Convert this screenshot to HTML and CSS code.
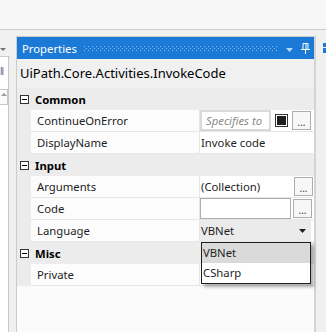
FILE: index.html
```html
<!DOCTYPE html>
<html lang="en">
<head>
    <meta charset="UTF-8">
    <meta name="viewport" content="width=device-width, initial-scale=1.0">
    <title>Properties</title>
    <link rel="stylesheet" href="styles.css">
</head>
<body>
    <div class="topbar"></div>
    <div class="workspace">
        <div class="left-pane">
            <div class="left-head"><span class="left-arrow"></span></div>
            <div class="left-body">
                <span class="left-text">ll</span>
                <div class="left-box"><span class="up-arrow"></span></div>
            </div>
        </div>

        <div class="props">
            <div class="props-head">
                <span class="props-title">Properties</span>
                <svg class="grip" width="194" height="6">
                    <defs>
                        <pattern id="dots" width="4" height="4" patternUnits="userSpaceOnUse">
                            <rect x="0" y="0" width="1" height="1" fill="#8dbdee"/>
                            <rect x="2" y="2" width="1" height="1" fill="#8dbdee"/>
                        </pattern>
                    </defs>
                    <rect width="194" height="6" fill="url(#dots)"/>
                </svg>
                <svg class="head-arrow" width="7" height="4"><path d="M0 0h7l-3.5 4z" fill="#b9d5f3"/></svg>
                <svg class="pin" width="9" height="11">
                    <path d="M2 0.5h5v6h-5z" fill="none" stroke="#fff"/>
                    <path d="M0 6.5h9" stroke="#fff"/>
                    <path d="M4.5 7v4" stroke="#fff"/>
                    <path d="M5 1v5" stroke="#fff"/>
                </svg>
            </div>

            <div class="type-name">UiPath.Core.Activities.InvokeCode</div>

            <div class="grid">
                <div class="cat"><span class="toggle"></span><span class="cat-name">Common</span></div>
                <div class="row">
                    <div class="indent"></div>
                    <div class="label">ContinueOnError</div>
                    <div class="value">
                        <span class="textbox placeholder">Specifies to</span>
                        <span class="check"><span></span></span>
                        <button class="dots">...</button>
                    </div>
                </div>
                <div class="row">
                    <div class="indent"></div>
                    <div class="label">DisplayName</div>
                    <div class="value"><span class="plain">Invoke code</span></div>
                </div>

                <div class="cat"><span class="toggle"></span><span class="cat-name">Input</span></div>
                <div class="row">
                    <div class="indent"></div>
                    <div class="label">Arguments</div>
                    <div class="value">
                        <span class="plain wide">(Collection)</span>
                        <button class="dots">...</button>
                    </div>
                </div>
                <div class="row">
                    <div class="indent"></div>
                    <div class="label">Code</div>
                    <div class="value">
                        <span class="textbox wide"></span>
                        <button class="dots">...</button>
                    </div>
                </div>
                <div class="row">
                    <div class="indent"></div>
                    <div class="label">Language</div>
                    <div class="value">
                        <span class="select">VBNet<svg width="7" height="4"><path d="M0 0h7l-3.5 4z" fill="#1e1e1e"/></svg></span>
                    </div>
                </div>

                <div class="cat"><span class="toggle"></span><span class="cat-name">Misc</span></div>
                <div class="row">
                    <div class="indent"></div>
                    <div class="label">Private</div>
                    <div class="value"></div>
                </div>
            </div>

            <ul class="popup">
                <li class="hover">VBNet</li>
                <li>CSharp</li>
            </ul>
        </div>

        <div class="right-side">
            <span class="tab-mark"></span>
            <span class="tab-mark low"></span>
        </div>
    </div>
</body>
</html>
```

FILE: styles.css
```css
body {
    margin: 0;
    width: 326px;
    height: 332px;
    overflow: hidden;
    background-color: #f0f0f0;
    font-family: "Noto Sans", sans-serif;
    font-size: 11.3px;
    color: #1e1e1e;
}

.topbar {
    height: 29px;
    background-color: #f7f7f7;
    border-bottom: 1px solid #cccccc;
}

.workspace {
    display: flex;
    padding-top: 6px;
    height: 296px;
}

/* left docked pane (cut off) */
.left-pane {
    width: 16px;
    flex-shrink: 0;
}

.left-head {
    height: 21px;
    padding-top: 12px;
    box-sizing: border-box;
    border-bottom: 1px solid #cccccc;
    width: 10px;
}

.left-arrow {
    display: block;
    width: 0;
    height: 0;
    border-left: 3px solid transparent;
    border-right: 3px solid transparent;
    border-top: 3px solid #717171;
}

.left-body {
    width: 9px;
    height: 280px;
    background-color: #fff;
    border-right: 1px solid #c8c8c8;
    overflow: hidden;
    padding-top: 8px;
    box-sizing: border-box;
}

.left-text {
    display: block;
    font-size: 10px;
    letter-spacing: -1px;
    color: #5b6d8a;
    line-height: 12px;
}

.left-box {
    margin-top: 12px;
    height: 16px;
    border: 1px solid #c8c8c8;
    border-left: none;
    background-color: #fafafa;
    padding-top: 3px;
    box-sizing: border-box;
}

.up-arrow {
    display: block;
    margin-left: 1px;
    width: 0;
    height: 0;
    border-left: 3px solid transparent;
    border-right: 3px solid transparent;
    border-bottom: 3px solid #9a9a9a;
}

/* properties window */
.props {
    position: relative;
    width: 300px;
    flex-shrink: 0;
    box-sizing: border-box;
    border: 1px solid #cccccc;
    border-right: 2px solid #d4d4d4;
    border-bottom: none;
    background-color: #fbfbfb;
}

.props-head {
    height: 22px;
    background-color: #1b7ad6;
    display: flex;
    align-items: center;
    padding-left: 5px;
}

.props-title {
    color: #fff;
    width: 62px;
    font-size: 11.3px;
}

.grip {
    display: block;
    margin-top: 2px;
}

.head-arrow {
    display: block;
    margin-left: 8px;
    margin-top: 3px;
}

.pin {
    display: block;
    margin-left: 8px;
}

.type-name {
    height: 29px;
    line-height: 28px;
    padding-left: 3px;
    background-color: #f0f0f0;
    font-size: 13px;
    color: #000;
}

.cat {
    height: 22px;
    display: flex;
    align-items: center;
    background-color: #ececec;
}

.toggle {
    position: relative;
    width: 7px;
    height: 7px;
    margin-left: 3px;
    border: 1px solid #333;
    background-color: #fff;
}

.toggle::after {
    content: "";
    position: absolute;
    left: 1px;
    top: 3px;
    width: 5px;
    height: 1px;
    background-color: #000;
}

.cat-name {
    margin-left: 6px;
    font-weight: bold;
    color: #000;
}

.row {
    display: flex;
    height: 22px;
}

.indent {
    width: 14px;
    background-color: #ececec;
}

.label {
    width: 169px;
    box-sizing: border-box;
    padding-left: 6px;
    line-height: 21px;
    border-right: 1px solid #e6e6e6;
    border-bottom: 1px solid #e6e6e6;
    background-color: #fcfcfc;
}

.value {
    flex: 1;
    display: flex;
    align-items: center;
    border-bottom: 1px solid #e6e6e6;
    background-color: #fff;
    height: 21px;
}

.plain {
    padding-left: 1px;
}

.plain.wide {
    width: 91px;
}

.textbox {
    box-sizing: border-box;
    width: 71px;
    height: 21px;
    border: 2px solid #d9d9d9;
    line-height: 17px;
    padding-left: 4px;
}

.textbox.wide {
    width: 91px;
    border: 1px solid #adadad;
}

.placeholder {
    color: #8a8a8a;
    font-style: italic;
}

.check {
    box-sizing: border-box;
    width: 13px;
    height: 13px;
    margin-left: 4px;
    border: 1px solid #333;
    padding: 1px;
    background-color: #fff;
}

.check span {
    display: block;
    width: 9px;
    height: 9px;
    background-color: #1e1e1e;
}

.dots {
    box-sizing: border-box;
    width: 19px;
    height: 19px;
    margin-left: 2px;
    padding: 0;
    border: 1px solid #adadad;
    background-color: #f7f7f7;
    font-family: inherit;
    font-size: 10px;
    line-height: 20px;
    color: #2b3a55;
}

.check + .dots {
    margin-left: 4px;
}

.select {
    box-sizing: border-box;
    width: 111px;
    height: 21px;
    display: flex;
    align-items: center;
    justify-content: space-between;
    padding: 0 5px 0 1px;
    background-color: #ebebeb;
}

.popup {
    position: absolute;
    left: 184px;
    top: 205px;
    width: 110px;
    margin: 0;
    padding: 0;
    list-style: none;
    box-sizing: border-box;
    border: 1px solid #1e1e1e;
    background-color: #fff;
    box-shadow: 3px 3px 3px rgba(0, 0, 0, 0.3);
}

.popup li {
    height: 20px;
    line-height: 19px;
    padding-left: 1px;
}

.popup .hover {
    background-color: #dadada;
}

.right-side {
    width: 10px;
    padding-top: 7px;
    display: flex;
    flex-direction: column;
    align-items: flex-end;
}

.tab-mark {
    width: 3px;
    height: 4px;
    background-color: #1b7ad6;
}

.tab-mark.low {
    margin-top: 1px;
    height: 5px;
}
```
